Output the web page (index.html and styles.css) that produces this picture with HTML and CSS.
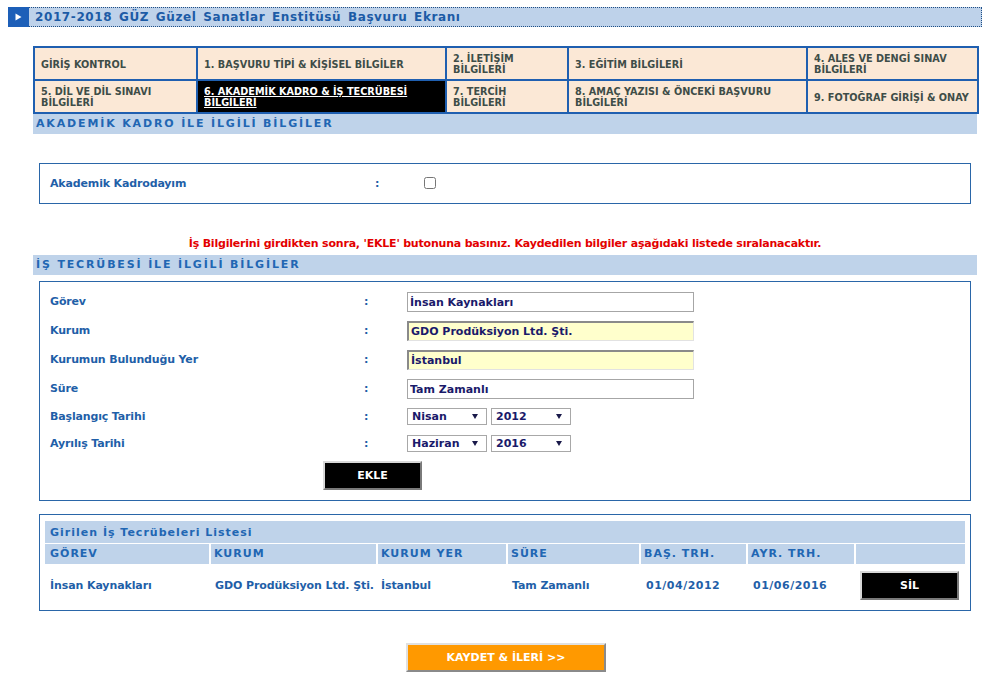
FILE: index.html
```html
<!DOCTYPE html>
<html lang="tr">
<head>
<meta charset="utf-8">
<title>Başvuru Ekranı</title>
<link rel="stylesheet" href="styles.css">
</head>
<body>
<div class="titlebar">
  <span class="arrow"><svg width="7" height="8" viewBox="0 0 7 8"><path d="M0.5 0.5 L6.5 4 L0.5 7.5 Z" fill="#fff"/></svg></span>
  <span class="title">2017-2018 GÜZ Güzel Sanatlar Enstitüsü Başvuru Ekranı</span>
</div>
<div class="content">
  <table class="tabs">
    <colgroup><col class="c1"><col class="c2"><col class="c3"><col class="c4"><col class="c5"></colgroup>
    <tr>
      <td>GİRİŞ KONTROL</td>
      <td>1. BAŞVURU TİPİ &amp; KİŞİSEL BİLGİLER</td>
      <td class="narrow">2. İLETİŞİM BİLGİLERİ</td>
      <td>3. EĞİTİM BİLGİLERİ</td>
      <td>4. ALES VE DENGİ SINAV BİLGİLERİ</td>
    </tr>
    <tr>
      <td>5. DİL VE DİL SINAVI BİLGİLERİ</td>
      <td class="active"><a href="#">6. AKADEMİK KADRO &amp; İŞ TECRÜBESİ BİLGİLERİ</a></td>
      <td class="narrow">7. TERCİH BİLGİLERİ</td>
      <td>8. AMAÇ YAZISI &amp; ÖNCEKİ BAŞVURU BİLGİLERİ</td>
      <td>9. FOTOĞRAF GİRİŞİ &amp; ONAY</td>
    </tr>
  </table>

  <div class="band">AKADEMİK KADRO İLE İLGİLİ BİLGİLER</div>

  <div class="box akademik">
    <span class="label">Akademik Kadrodayım</span>
    <span class="colon">:</span>
    <input type="checkbox" class="check">
  </div>

  <p class="warn">İş Bilgilerini girdikten sonra, 'EKLE' butonuna basınız. Kaydedilen bilgiler aşağıdaki listede sıralanacaktır.</p>

  <div class="band band2">İŞ TECRÜBESİ İLE İLGİLİ BİLGİLER</div>

  <div class="box form">
    <div class="row"><span class="label">Görev</span><span class="colon">:</span><input class="txt" type="text" value="İnsan Kaynakları"></div>
    <div class="row"><span class="label">Kurum</span><span class="colon">:</span><input class="txt filled" type="text" value="GDO Prodüksiyon Ltd. Şti."></div>
    <div class="row"><span class="label">Kurumun Bulunduğu Yer</span><span class="colon">:</span><input class="txt filled" type="text" value="İstanbul"></div>
    <div class="row"><span class="label">Süre</span><span class="colon">:</span><input class="txt" type="text" value="Tam Zamanlı"></div>
    <div class="row srow"><span class="label">Başlangıç Tarihi</span><span class="colon">:</span>
      <span class="sel">Nisan<i class="tri"></i></span><span class="sel">2012<i class="tri"></i></span></div>
    <div class="row srow"><span class="label">Ayrılış Tarihi</span><span class="colon">:</span>
      <span class="sel">Haziran<i class="tri"></i></span><span class="sel">2016<i class="tri"></i></span></div>
    <div class="btnrow"><button class="blackbtn ekle">EKLE</button></div>
  </div>

  <div class="box list">
    <table class="grid">
      <colgroup><col class="g1"><col class="g2"><col class="g3"><col class="g4"><col class="g5"><col class="g6"><col class="g7"></colgroup>
      <tr class="caption"><td colspan="7">Girilen İş Tecrübeleri Listesi</td></tr>
      <tr class="head"><td>GÖREV</td><td>KURUM</td><td>KURUM YER</td><td>SÜRE</td><td>BAŞ. TRH.</td><td>AYR. TRH.</td><td></td></tr>
      <tr class="data"><td>İnsan Kaynakları</td><td>GDO Prodüksiyon Ltd. Şti.</td><td>İstanbul</td><td>Tam Zamanlı</td><td>01/04/2012</td><td>01/06/2016</td><td><button class="blackbtn sil">SİL</button></td></tr>
    </table>
  </div>

  <div class="save"><button class="savebtn">KAYDET &amp; İLERİ &gt;&gt;</button></div>
</div>
</body>
</html>
```
FILE: styles.css
```css
* { box-sizing: border-box; }
body {
  margin: 0;
  padding: 7px 13px 0 8px;
  background: #fff;
  font-family: "DejaVu Sans", Verdana, sans-serif;
  font-weight: bold;
  font-size: 11px;
  color: #1f5fa8;
}
.titlebar {
  display: flex;
  height: 20px;
  width: 974px;
}
.arrow {
  width: 21px;
  height: 20px;
  background: #1d5fb8;
  display: flex;
  align-items: center;
  justify-content: center;
}
.title {
  flex: 1;
  background: #bed2ea;
  border-top: 1px dotted #1f4f86;
  border-bottom: 1px dotted #1f4f86;
  border-right: 1px dotted #1f4f86;
  color: #1c5ba6;
  font-size: 12px;
  letter-spacing: 0.6px;
  word-spacing: 2px;
  line-height: 18px;
  padding-left: 6px;
}
.content {
  width: 944px;
  margin: 19px 0 0 25px;
}
.tabs {
  width: 944px;
  border-collapse: collapse;
  table-layout: fixed;
  background: #fbe8d6;
  border: 2px solid #1f5fb0;
}
.tabs .c1 { width: 163px; }
.tabs .c2 { width: 249px; }
.tabs .c3 { width: 122px; }
.tabs .c4 { width: 239px; }
.tabs .c5 { width: 171px; }
.tabs td {
  border: 2px solid #1f5fb0;
  height: 33px;
  padding: 1px 4px 0 6px;
  font-size: 9.7px;
  line-height: 11px;
  color: #3e4d48;
  vertical-align: middle;
}
.tabs td.narrow { padding-right: 16px; }
.tabs td.active { background: #000; }
.tabs td.active a { color: #fff; text-decoration: underline; }
.band {
  background: #bfd3ea;
  height: 20px;
  margin-top: 0;
  padding-left: 3px;
  line-height: 19px;
  letter-spacing: 1.85px;
  color: #2166b3;
  font-size: 11px;
}
.box {
  margin: 0 6px;
  border: 1px solid #2a66a8;
}
.akademik {
  margin-top: 29px;
  height: 41px;
  display: flex;
  align-items: center;
  padding-left: 10px;
}
.label { color: #1f5fa8; letter-spacing: -0.15px; }
.akademik .label { width: 325px; }
.akademik .colon { width: 49px; }
.check {
  margin: 0;
  width: 12px;
  height: 12px;
  position: relative;
  top: -1px;
}
.warn {
  margin: 33px 0 0;
  text-align: center;
  color: #e30000;
  font-size: 11px;
  letter-spacing: -0.2px;
  height: 14px;
  line-height: 14px;
}
.band2 { margin-top: 4px; }
.form {
  margin-top: 6px;
  padding: 5px 0 10px 10px;
  height: 220px;
}
.row {
  display: flex;
  align-items: center;
  height: 29px;
}
.row.srow { height: 28px; margin-top: -1px; }
.row.srow + .row.srow { height: 27px; margin-top: 0; }
.row .label { width: 314px; }
.row .colon { width: 43px; }
.txt {
  width: 287px;
  height: 20px;
  border: 1px solid #a6a6a6;
  padding: 1px 2px 0;
  font-family: "DejaVu Sans", Verdana, sans-serif;
  font-weight: bold;
  font-size: 11px;
  color: #1a1a6a;
  background: #fff;
}
.txt.filled {
  background: #ffffcc;
  border-top: 2px solid #8a8a8a;
  border-left: 2px solid #8a8a8a;
  border-right: 1px solid #e2e2e2;
  border-bottom: 1px solid #e2e2e2;
}
.sel {
  position: relative;
  display: inline-block;
  width: 80px;
  height: 17px;
  border: 1px solid #a8a8a8;
  margin-right: 4px;
  padding-left: 4px;
  color: #1a1a6a;
  font-size: 11px;
  line-height: 16px;
  background: #fff;
}
.tri {
  position: absolute;
  right: 8px;
  top: 5px;
  width: 0;
  height: 0;
  border-left: 3px solid transparent;
  border-right: 3px solid transparent;
  border-top: 5px solid #1a1a4a;
}
.btnrow {
  padding-left: 273px;
  margin-top: 4px;
}
.blackbtn {
  width: 99px;
  height: 29px;
  background: #000;
  color: #fff;
  font-family: "DejaVu Sans", Verdana, sans-serif;
  font-weight: bold;
  font-size: 11px;
  border: 2px solid;
  border-color: #d8d8d8 #7a7a7a #7a7a7a #d8d8d8;
  padding: 0;
}
.list {
  margin-top: 13px;
  height: 97px;
  padding: 6px 5px 0;
}
.grid {
  width: 920px;
  border-collapse: collapse;
  table-layout: fixed;
}
.grid .g1 { width: 165px; }
.grid .g2 { width: 167px; }
.grid .g3 { width: 130px; }
.grid .g4 { width: 133px; }
.grid .g5 { width: 107px; }
.grid .g6 { width: 108px; }
.grid .g7 { width: 110px; }
.grid .caption td {
  background: #bfd3ea;
  height: 22px;
  padding: 2px 0 0 5px;
  letter-spacing: 1px;
  color: #2166b3;
}
.grid .head td {
  background: #bfd3ea;
  height: 21px;
  border-top: 1px solid #fff;
  border-left: 2px solid #fff;
  padding-left: 3px;
  letter-spacing: 1px;
  color: #2166b3;
}
.grid .head td:first-child { border-left: 0; padding-left: 5px; }
.grid .data td {
  height: 42px;
  padding-left: 5px;
  color: #1f5fa8;
  vertical-align: middle;
  white-space: nowrap;
  letter-spacing: -0.1px;
}
.grid .data td:nth-child(2) { padding-left: 5px; }
.grid .data td:nth-child(3) { padding-left: 4px; }
.grid .data td:nth-child(4) { padding-left: 5px; }
.grid .data td:nth-child(5) { padding-left: 6px; letter-spacing: 0.5px; }
.grid .data td:nth-child(6) { padding-left: 6px; letter-spacing: 0.5px; }
.grid .data td:nth-child(7) { padding-left: 5px; }
.sil { width: 99px; height: 29px; }
.save {
  margin-top: 32px;
  padding-left: 373px;
}
.savebtn {
  width: 200px;
  height: 29px;
  background: #ff9900;
  color: #fff;
  font-family: "DejaVu Sans", Verdana, sans-serif;
  font-weight: bold;
  font-size: 11px;
  border: 2px solid;
  border-color: #e0e0e0 #8a8a8a #8a8a8a #e0e0e0;
  padding: 0;
}
```
